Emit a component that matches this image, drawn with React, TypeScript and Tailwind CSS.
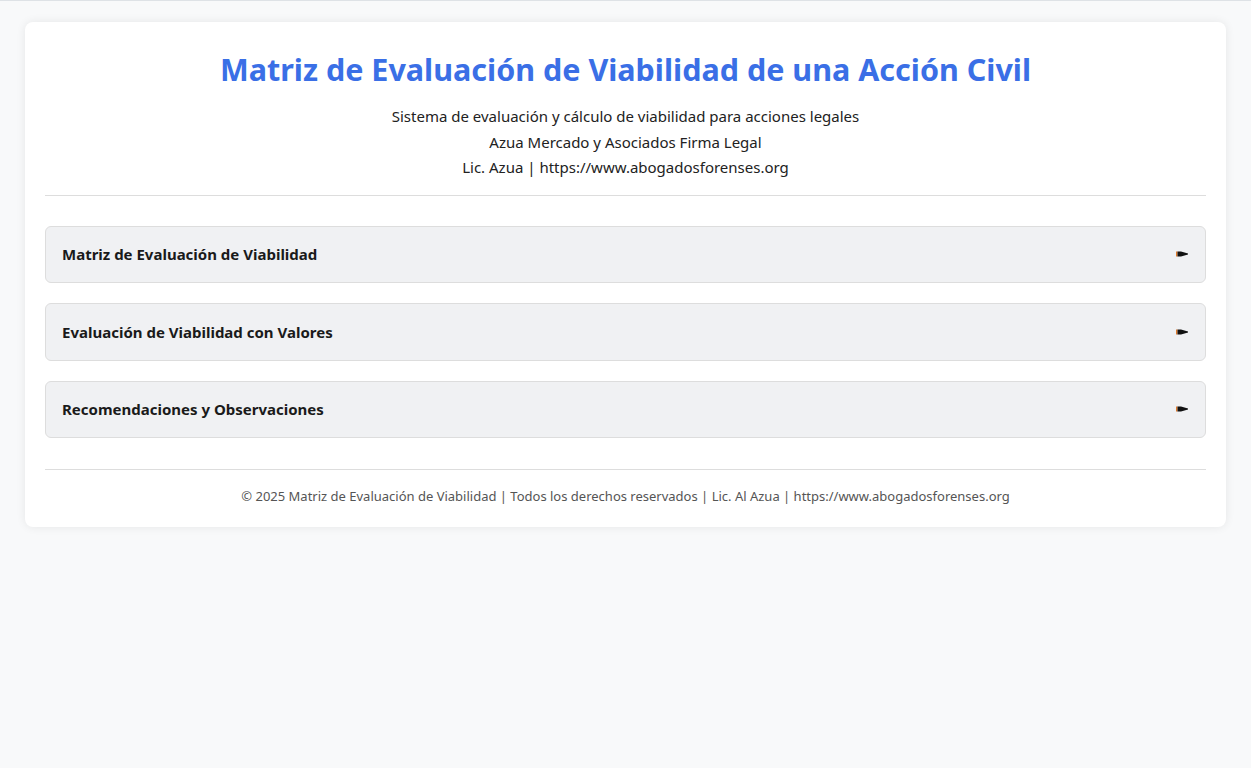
export default function App() {
  const sections = [
    "Matriz de Evaluación de Viabilidad",
    "Evaluación de Viabilidad con Valores",
    "Recomendaciones y Observaciones",
  ]

  return (
    <div
      className="min-h-screen bg-[#f8f9fa] border-t border-[#dee2e6] px-[25px] pt-[21px]"
      style={{ fontFamily: '"Noto Sans", "Open Sans", sans-serif' }}
    >
      <div className="bg-white rounded-lg shadow-[0_0_10px_rgba(0,0,0,0.08)] px-5 pt-[27px] pb-[21px]">
        <header className="text-center pb-[14px] border-b border-[#dddddd]">
          <h1 className="text-[30.5px] font-bold text-[#3a6fe6] leading-[40px]">
            Matriz de Evaluación de Viabilidad de una Acción Civil
          </h1>
          <div className="mt-[15px] text-[15px] leading-[25.5px] text-[#222]">
            <p>Sistema de evaluación y cálculo de viabilidad para acciones legales</p>
            <p>Azua Mercado y Asociados Firma Legal</p>
            <p>Lic. Azua | https://www.abogadosforenses.org</p>
          </div>
        </header>

        <div className="flex flex-col gap-5 mt-[30px]">
          {sections.map((s) => (
            <div
              key={s}
              className="h-[57.5px] flex items-center justify-between px-4 bg-[#f0f1f3] border border-[#dddddd] rounded-md"
            >
              <span className="text-[15px] font-bold text-[#1a1a1a]">{s}</span>
              <svg width="12" height="6" viewBox="0 0 12 6" className="mr-[1px]">
                <rect x="0" y="0.5" width="1.5" height="5" fill="#e07a2a" />
                <path d="M1.5 0.5 H5 L12 2.6 V3.4 L5 5.5 H1.5 Z" fill="#111" />
              </svg>
            </div>
          ))}
        </div>

        <footer className="mt-[31px] pt-[16px] border-t border-[#dddddd] text-center text-[13px] text-[#555] leading-[20px]">
          © 2025 Matriz de Evaluación de Viabilidad | Todos los derechos reservados | Lic. Al Azua | https://www.abogadosforenses.org
        </footer>
      </div>
    </div>
  )
}
